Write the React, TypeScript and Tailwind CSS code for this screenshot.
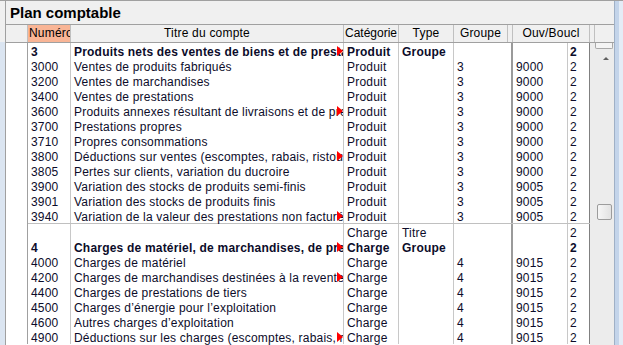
import React from 'react';

type Row = {
  num: string;
  title: string;
  cat: string;
  type?: string;
  grp?: string;
  ouv?: string;
  boucl: string;
  bold?: boolean;
  more?: boolean;
};

const produits: Row[] = [
  { num: '3', title: 'Produits nets des ventes de biens et de prestations de services', cat: 'Produit', type: 'Groupe', boucl: '2', bold: true, more: true },
  { num: '3000', title: 'Ventes de produits fabriqués', cat: 'Produit', grp: '3', ouv: '9000', boucl: '2' },
  { num: '3200', title: 'Ventes de marchandises', cat: 'Produit', grp: '3', ouv: '9000', boucl: '2' },
  { num: '3400', title: 'Ventes de prestations', cat: 'Produit', grp: '3', ouv: '9000', boucl: '2' },
  { num: '3600', title: 'Produits annexes résultant de livraisons et de prestations', cat: 'Produit', grp: '3', ouv: '9000', boucl: '2', more: true },
  { num: '3700', title: 'Prestations propres', cat: 'Produit', grp: '3', ouv: '9000', boucl: '2' },
  { num: '3710', title: 'Propres consommations', cat: 'Produit', grp: '3', ouv: '9000', boucl: '2' },
  { num: '3800', title: 'Déductions sur ventes (escomptes, rabais, ristournes)', cat: 'Produit', grp: '3', ouv: '9000', boucl: '2', more: true },
  { num: '3805', title: 'Pertes sur clients, variation du ducroire', cat: 'Produit', grp: '3', ouv: '9000', boucl: '2' },
  { num: '3900', title: 'Variation des stocks de produits semi-finis', cat: 'Produit', grp: '3', ouv: '9005', boucl: '2' },
  { num: '3901', title: 'Variation des stocks de produits finis', cat: 'Produit', grp: '3', ouv: '9005', boucl: '2' },
  { num: '3940', title: 'Variation de la valeur des prestations non facturées', cat: 'Produit', grp: '3', ouv: '9005', boucl: '2', more: true },
];

const charges: Row[] = [
  { num: '', title: '', cat: 'Charge', type: 'Titre', boucl: '2' },
  { num: '4', title: "Charges de matériel, de marchandises, de prestations et d'énergie", cat: 'Charge', type: 'Groupe', boucl: '2', bold: true, more: true },
  { num: '4000', title: 'Charges de matériel', cat: 'Charge', grp: '4', ouv: '9015', boucl: '2' },
  { num: '4200', title: 'Charges de marchandises destinées à la revente', cat: 'Charge', grp: '4', ouv: '9015', boucl: '2', more: true },
  { num: '4400', title: 'Charges de prestations de tiers', cat: 'Charge', grp: '4', ouv: '9015', boucl: '2' },
  { num: '4500', title: 'Charges d’énergie pour l’exploitation', cat: 'Charge', grp: '4', ouv: '9015', boucl: '2' },
  { num: '4600', title: 'Autres charges d’exploitation', cat: 'Charge', grp: '4', ouv: '9015', boucl: '2' },
  { num: '4900', title: 'Déductions sur les charges (escomptes, rabais, ristournes)', cat: 'Charge', grp: '4', ouv: '9015', boucl: '2', more: true },
];

function TableRow({ row }: { row: Row }) {
  const weight = row.bold ? 'font-bold' : '';
  return (
    <div className={`flex h-[15px] leading-[16px] whitespace-nowrap ${weight}`}>
      <div className="w-[20px] shrink-0 border-r border-[#a0a0a0] bg-white" />
      <div className="w-[43px] shrink-0 overflow-x-clip border-r border-[#c8c8c8] pl-[3px] pt-[1px]">{row.num}</div>
      <div className="relative w-[273px] shrink-0 overflow-x-clip border-r border-[#c8c8c8] pl-[3px] pt-[1px]">
        {row.title}
        {row.more && (
          <span className="absolute right-0 top-[3px] h-0 w-0 border-y-[5px] border-l-[6px] border-y-transparent border-l-[#ff0000]" />
        )}
      </div>
      <div className="w-[55px] shrink-0 overflow-x-clip border-r border-[#c8c8c8] pl-[3px] pt-[1px]">{row.cat}</div>
      <div className="w-[55px] shrink-0 overflow-x-clip border-r border-[#c8c8c8] pl-[3px] pt-[1px]">{row.type}</div>
      <div className="w-[59px] shrink-0 overflow-x-clip border-r-2 border-[#9a9a9a] pl-[3px] pt-[1px]">{row.grp}</div>
      <div className="w-[55px] shrink-0 overflow-x-clip border-r border-[#c8c8c8] pl-[3px] pt-[1px]">{row.ouv}</div>
      <div className="w-[22px] shrink-0 overflow-x-clip border-r border-[#808080] pl-[2px] pt-[1px]">{row.boucl}</div>
    </div>
  );
}

export default function App() {
  return (
    <div className="flex h-[345px] w-[623px] overflow-hidden border-t border-[#a0a0a0] bg-[#f0f0f0] font-['Liberation_Sans',Arial,sans-serif] text-[12px] tracking-[0.2px] text-[#0c0c2a]">
      {/* left frame */}
      <div className="flex w-[6px] shrink-0 flex-col border-r border-[#a0a0a0]">
        <div className="h-[41px] shrink-0" />
        <div className="flex-1 bg-[#dbe5f1]" />
      </div>

      <div className="flex w-[608px] shrink-0 flex-col">
        <div className="h-[24px] shrink-0 border-b border-[#a0a0a0] pl-[4px] pt-[3px] text-[15px] font-bold leading-[17px] tracking-normal text-black">
          Plan comptable
        </div>

        {/* column headers */}
        <div className="flex h-[18px] shrink-0 border-b border-[#a0a0a0] leading-[16px] whitespace-nowrap text-black">
          <div className="w-[2px] shrink-0" />
          <div className="w-[20px] shrink-0 border-r border-[#c0c0c0]" />
          <div className="w-[43px] shrink-0 overflow-hidden border-r border-[#c0c0c0] bg-[#f9b596] pl-[1px]">Numéro</div>
          <div className="w-[273px] shrink-0 border-r border-[#c0c0c0] text-center">Titre du compte</div>
          <div className="w-[55px] shrink-0 overflow-hidden border-r border-[#c0c0c0] pl-[1px] tracking-normal">Catégorie</div>
          <div className="w-[55px] shrink-0 border-r border-[#c0c0c0] text-center">Type</div>
          <div className="w-[54px] shrink-0 border-r border-[#c0c0c0] text-center">Groupe</div>
          <div className="w-[5px] shrink-0 border-r border-[#c0c0c0]" />
          <div className="w-[77px] shrink-0 overflow-hidden border-r border-[#c0c0c0] text-center">Ouv/Boucl</div>
          <div className="w-[5px] shrink-0 border-r border-[#c0c0c0]" />
          <div className="w-[19px] shrink-0" />
        </div>

        <div className="flex min-h-0 flex-1">
          <div className="w-[2px] shrink-0 bg-white" />
          <div className="flex w-[582px] shrink-0 flex-col bg-white">
            {produits.map((r) => (
              <TableRow key={r.num} row={r} />
            ))}
            <div className="flex h-[1px] shrink-0">
              <div className="w-[20px] shrink-0 border-r border-[#a0a0a0]" />
              <div className="flex-1 bg-[#c0c0c0]" />
            </div>
            {charges.map((r, i) => (
              <TableRow key={'c' + i} row={r} />
            ))}
          </div>

          {/* vertical scrollbar */}
          <div className="flex w-[24px] shrink-0 flex-col bg-[#ececec] pl-[5px]">
            <div className="h-[6px] w-[18px] rounded-b-[2px] border border-t-0 border-[#a8a8a8] bg-[#f4f4f4]" />
            <div className="ml-[8px] mt-[8px] h-0 w-0 border-x-[3px] border-b-[3px] border-x-transparent border-b-[#606060]" />
            <div className="ml-[2px] mt-[144px] h-[16px] w-[15px] rounded-[2px] border border-[#9c9c9c] bg-[linear-gradient(to_right,#f6f6f6,#e2e2e2)]" />
          </div>
        </div>
      </div>

      {/* right frame */}
      <div className="flex w-[9px] shrink-0">
        <div className="w-[1px] bg-[#9fb0c6]" />
        <div className="w-[4px] bg-[#c3d4ea]" />
        <div className="flex-1 bg-[#e4ecf6]" />
      </div>
    </div>
  );
}
